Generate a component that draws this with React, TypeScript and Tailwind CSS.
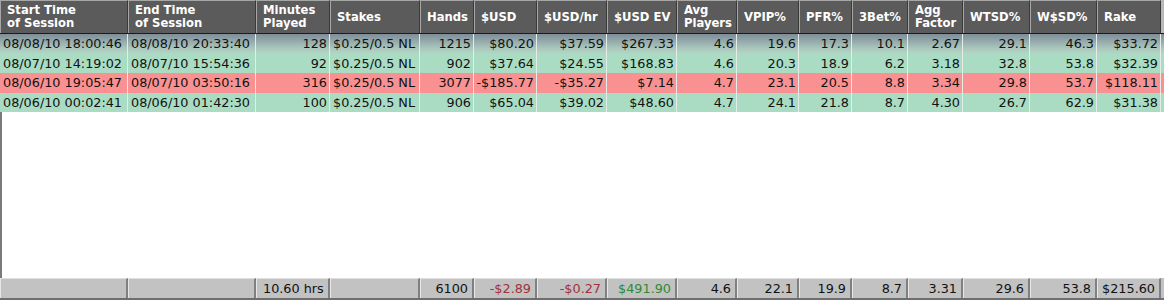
import React from "react";

const cols = "grid grid-cols-[128px_128px_74px_90px_54px_63px_70px_70px_60px_62px_53px_56px_55px_67px_67px_64px]";

const headers: string[][] = [
  ["Start Time", "of Session"],
  ["End Time", "of Session"],
  ["Minutes", "Played"],
  ["Stakes"],
  ["Hands"],
  ["$USD"],
  ["$USD/hr"],
  ["$USD EV"],
  ["Avg", "Players"],
  ["VPIP%"],
  ["PFR%"],
  ["3Bet%"],
  ["Agg", "Factor"],
  ["WTSD%"],
  ["W$SD%"],
  ["Rake"],
];

type Row = { kind: "sel" | "green" | "red"; cells: string[] };

const rows: Row[] = [
  { kind: "sel", cells: ["08/08/10 18:00:46", "08/08/10 20:33:40", "128", "$0.25/0.5 NL", "1215", "$80.20", "$37.59", "$267.33", "4.6", "19.6", "17.3", "10.1", "2.67", "29.1", "46.3", "$33.72"] },
  { kind: "green", cells: ["08/07/10 14:19:02", "08/07/10 15:54:36", "92", "$0.25/0.5 NL", "902", "$37.64", "$24.55", "$168.83", "4.6", "20.3", "18.9", "6.2", "3.18", "32.8", "53.8", "$32.39"] },
  { kind: "red", cells: ["08/06/10 19:05:47", "08/07/10 03:50:16", "316", "$0.25/0.5 NL", "3077", "-$185.77", "-$35.27", "$7.14", "4.7", "23.1", "20.5", "8.8", "3.34", "29.8", "53.7", "$118.11"] },
  { kind: "green", cells: ["08/06/10 00:02:41", "08/06/10 01:42:30", "100", "$0.25/0.5 NL", "906", "$65.04", "$39.02", "$48.60", "4.7", "24.1", "21.8", "8.7", "4.30", "26.7", "62.9", "$31.38"] },
];

const footer: { t: string; c?: string; left?: boolean }[] = [
  { t: "" },
  { t: "" },
  { t: "10.60 hrs", left: true },
  { t: "" },
  { t: "6100" },
  { t: "-$2.89", c: "text-[#a3313a]" },
  { t: "-$0.27", c: "text-[#a3313a]" },
  { t: "$491.90", c: "text-[#2f8a2f]" },
  { t: "4.6" },
  { t: "22.1" },
  { t: "19.9" },
  { t: "8.7" },
  { t: "3.31" },
  { t: "29.6" },
  { t: "53.8" },
  { t: "$215.60" },
];

const font = { fontFamily: '"DejaVu Sans", Verdana, sans-serif' };

export default function App() {
  return (
    <div className="w-[1164px] h-[302px] bg-white flex flex-col overflow-hidden" style={font}>
      {/* header */}
      <div className={`${cols} h-[34px] bg-[#b8b8b8] border-b border-[#1c1c1c]`}>
        {headers.map((h, i) => (
          <div
            key={i}
            className="bg-[#5b5b5b] border-t border-l border-[#a6a6a6] border-r border-r-[#3a3a3a] text-white font-bold text-[11.6px] leading-[13px] pl-[6px] flex flex-col justify-center"
          >
            {h.map((l, j) => (
              <span key={j} className="whitespace-nowrap">{l}</span>
            ))}
          </div>
        ))}
      </div>

      {/* body */}
      <div className="flex-1 flex flex-col border-l-2 border-[#7a7a7a]">
        {rows.map((r, ri) => (
          <div
            key={ri}
            className={`${cols} h-[19.5px] -ml-[2px] ${
              r.kind === "sel"
                ? "bg-[linear-gradient(to_bottom,#7f8d99,#a9c6bb_70%,#b3d6c6)]"
                : r.kind === "green"
                ? "bg-[#a9dcc3]"
                : "bg-[#f99192]"
            }`}
          >
            {r.cells.map((c, ci) => (
              <div
                key={ci}
                className={`border-r border-[#e4ece8] text-[12.8px] leading-[19px] text-[#111] whitespace-nowrap overflow-hidden ${
                  ci < 2 || ci === 3 ? "text-left pl-[3px]" : "text-right pr-[2px]"
                }`}
              >
                {c}
              </div>
            ))}
          </div>
        ))}
      </div>

      {/* footer */}
      <div className={`${cols} h-[22px] bg-[#c2c2c2] border-b-2 border-[#6e6e6e]`}>
        {footer.map((f, i) => (
          <div
            key={i}
            className={`border-l border-l-[#e8e8e8] border-r-2 border-r-[#808080] border-t border-t-[#e0e0e0] text-[12.8px] leading-[19px] whitespace-nowrap ${
              f.left ? "text-left pl-[6px]" : "text-right pr-[4px]"
            } ${f.c ?? "text-[#111]"}`}
          >
            {f.t}
          </div>
        ))}
      </div>
      <div className="h-[2px] bg-white" />
    </div>
  );
}
